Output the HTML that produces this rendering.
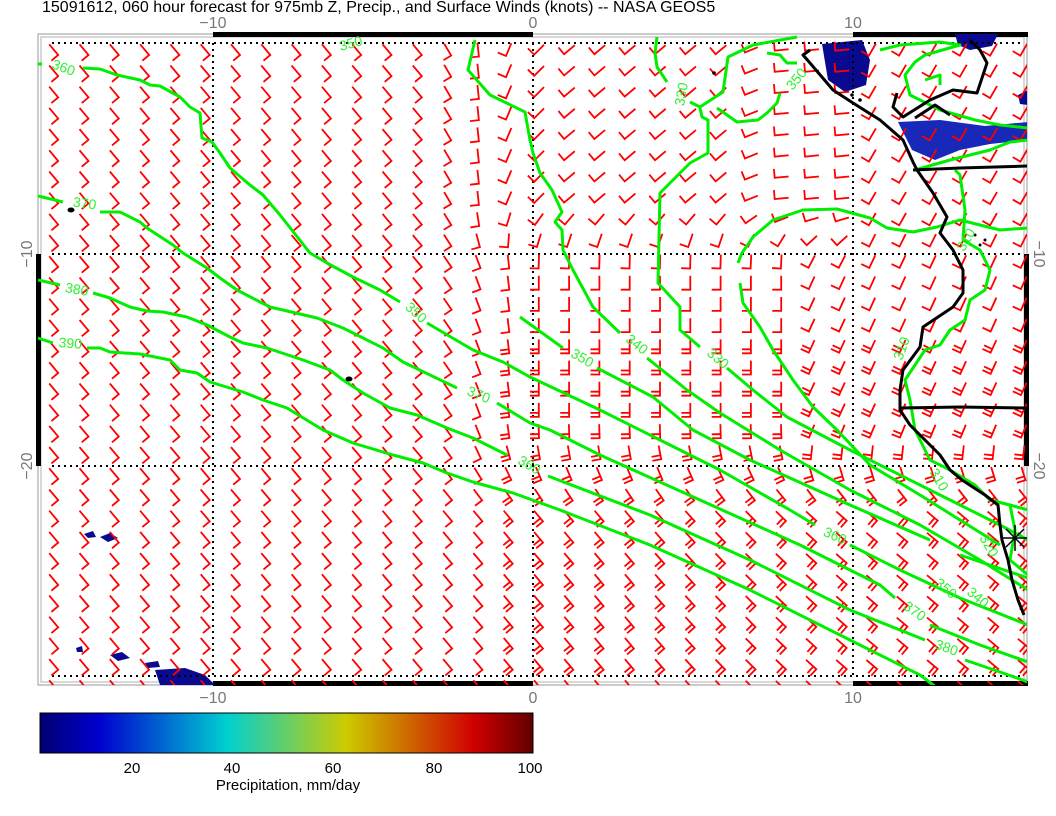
<!DOCTYPE html>
<html><head><meta charset="utf-8"><style>
html,body{margin:0;padding:0;background:#fff;width:1056px;height:816px;overflow:hidden}
svg{display:block}
text{font-family:"Liberation Sans",sans-serif}
</style></head><body>
<svg id="s" width="1056" height="816" viewBox="0 0 1056 816" xmlns="http://www.w3.org/2000/svg">
<defs>
<linearGradient id="cb" x1="0" x2="1" y1="0" y2="0">
<stop offset="0" stop-color="#000070"/>
<stop offset="0.12" stop-color="#0000d0"/>
<stop offset="0.38" stop-color="#00d0d0"/>
<stop offset="0.62" stop-color="#cccc00"/>
<stop offset="0.88" stop-color="#d00000"/>
<stop offset="1" stop-color="#600000"/>
</linearGradient>
<clipPath id="pc"><rect x="38" y="34" width="989" height="651"/></clipPath>
</defs>
<text x="42" y="12" font-size="16" fill="#000">15091612, 060 hour forecast for 975mb Z, Precip., and Surface Winds (knots) -- NASA GEOS5</text>
<g font-size="16" fill="#777" text-anchor="middle">
<text x="213" y="28">−10</text><text x="533" y="28">0</text><text x="853" y="28">10</text>
<text x="213" y="703">−10</text><text x="533" y="703">0</text><text x="853" y="703">10</text>
<text transform="translate(32,254) rotate(-90)">−10</text>
<text transform="translate(32,466) rotate(-90)">−20</text>
<text transform="translate(1034,254) rotate(90)">−10</text>
<text transform="translate(1034,466) rotate(90)">−20</text>
</g>
<rect x="38" y="34" width="989" height="651" fill="none" stroke="#999" stroke-width="1"/>
<rect x="41" y="37" width="983" height="645" fill="none" stroke="#ccc" stroke-width="1.5"/>
<g fill="#000">
<rect x="213" y="32" width="320" height="5"/><rect x="853" y="32" width="175" height="5"/>
<rect x="213" y="681" width="320" height="5"/><rect x="853" y="681" width="175" height="5"/>
<rect x="36" y="254" width="5" height="212"/><rect x="1024" y="254" width="5" height="212"/>
</g>
<g clip-path="url(#pc)">
<g fill="#0a0a90">
<path d="M822 44 L862 40 L870 60 L866 85 L845 92 L828 80 Z"/>
<path d="M955 34 L998 34 L992 46 L970 50 L958 45 Z"/>
<path d="M1018 95 L1028 90 L1028 105 L1020 104 Z"/>
<path d="M84 534 L93 531 L96 537 L88 538 Z"/>
<path d="M100 537 L110 533 L118 538 L108 542 Z"/>
<path d="M76 648 L82 646 L83 652 L77 652 Z"/>
<path d="M110 655 L122 652 L130 658 L118 661 Z"/>
<path d="M145 663 L158 661 L160 667 L148 668 Z"/>
<path d="M155 670 L185 668 L205 675 L215 685 L160 685 Z"/>
</g>
<path d="M898 122 L940 120 L985 126 L1028 122 L1028 140 L990 144 L960 150 L935 160 L912 150 Z" fill="#1828b8"/>
<g stroke="#000" stroke-width="2" stroke-dasharray="2,4" fill="none">
<line x1="52" y1="43" x2="1022" y2="43"/>
<line x1="52" y1="676" x2="1022" y2="676"/>
<line x1="52" y1="254" x2="1022" y2="254"/>
<line x1="52" y1="466" x2="1022" y2="466"/>
<line x1="213" y1="43" x2="213" y2="676"/>
<line x1="533" y1="43" x2="533" y2="676"/>
<line x1="853" y1="43" x2="853" y2="676"/>
</g>
<g id="barbs" stroke="#ff0000" stroke-width="1.8" fill="none" stroke-linecap="square"></g>
<g stroke="#00ee00" stroke-width="3" fill="none" stroke-linejoin="round">
<polyline points="38,64 42,64"/>
<polyline points="83,68 100,69 117,75 140,80 150,85 160,86 180,97 190,107 200,113 202,138 212,142 220,153 230,168 250,185 263,195 280,215 310,253 327,263 353,277 380,290 400,302"/>
<polyline points="427,323 473,350 503,362 530,377 600,410 660,440 720,470 790,510 815,525"/>
<polyline points="850,545 900,570 960,598 1028,625"/>
<polyline points="38,196 63,202"/>
<polyline points="100,212 120,212 140,222 147,228 173,245 183,253 207,268 220,278 237,290 270,307 317,318 343,328 383,348 403,362 430,375 457,388"/>
<polyline points="497,403 530,423 550,430 600,455 700,500 800,545 880,585 895,598"/>
<polyline points="930,625 980,645 1028,662"/>
<polyline points="38,280 60,285"/>
<polyline points="93,293 110,298 130,307 147,311 163,312 187,317 207,325 230,337 243,343 267,348 303,360 330,370 343,380 363,393 390,408 417,415 447,428 473,438 507,455"/>
<polyline points="548,476 650,515 750,560 850,610 925,640"/>
<polyline points="965,660 1000,672 1028,682"/>
<polyline points="38,338 53,343"/>
<polyline points="87,348 100,348 110,352 140,354 170,360 180,370 197,373 210,382 243,392 263,400 287,408 323,430 353,443 393,455 423,463 447,473 473,482 513,493 560,510 650,545 750,590 850,640 920,675 940,690"/>
<polyline points="475,40 468,70 490,95 525,112 530,140 533,153 540,173 552,190 562,212 555,222 562,230 563,250 573,270 593,307 620,333"/>
<polyline points="647,358 687,390 720,413 780,450 850,490 920,525 980,560 1028,590"/>
<polyline points="520,317 563,348"/>
<polyline points="597,368 653,397 693,430 750,460 850,505 930,540"/>
<polyline points="960,555 1028,578"/>
<polyline points="657,37 655,53 657,67 667,82"/>
<polyline points="690,102 700,107 723,92 728,57 753,45 797,37"/>
<polyline points="700,108 702,117 708,120 708,153 690,163 660,193 658,283 680,307 680,330 700,347"/>
<polyline points="727,368 753,390 787,417 850,450 930,490 1000,525 1028,540"/>
<polyline points="738,263 742,253 753,237 773,220 803,210 837,209 870,218 887,228 913,232 937,227 960,220 1000,230 1028,228"/>
<polyline points="740,283 743,303 760,327 773,350 793,380 813,407 837,430 870,465 920,495 960,520 1000,545"/>
<polyline points="767,53 780,55 787,63 797,63"/>
<polyline points="780,93 777,103 767,113 758,120 737,122 717,108"/>
<polyline points="880,50 900,45 940,42 960,45 925,55 915,62 905,75 910,95 940,110 975,120 1000,125 1028,128"/>
<polyline points="925,80 940,75 940,85"/>
<polyline points="915,170 950,160 990,150 1010,142 1028,140"/>
<polyline points="955,170 960,175 965,210 963,240 980,250 990,270 985,290 970,300 965,320 950,330 940,345 925,350 915,365 905,380 910,400 915,430 930,460 950,470 975,485 990,500 1010,505 1015,530 1010,560 1028,575"/>
<polyline points="1010,505 1028,510"/>
</g>
<g stroke="#000" stroke-width="3" fill="none" stroke-linejoin="round">
<polyline points="810,50 803,55 810,63 833,90 853,103 880,120 903,140 913,162 917,170 933,193 947,217 940,233 953,250 963,270 963,293 953,307 923,327 920,347 903,370 900,390 900,410 910,425 925,440 940,455 950,470 962,480 985,495 998,505 1000,525 1002,540 1008,560 1012,580 1018,600 1024,615"/>
<polyline points="913,170 960,168 1028,166"/>
<polyline points="900,408 960,407 1028,408"/>
<polyline points="897,93 893,107 903,117 930,100 953,90 977,93 987,63 980,50 970,40"/>
<polyline points="915,118 935,105 950,115"/>
</g>
<g fill="#000"><ellipse cx="71" cy="210" rx="3.5" ry="2.5"/><ellipse cx="349" cy="379" rx="3.5" ry="2.5"/><circle cx="714" cy="73" r="1.8"/><circle cx="975" cy="235" r="1.5"/><circle cx="985" cy="240" r="1.5"/><circle cx="980" cy="245" r="1.5"/><circle cx="852" cy="95" r="1.8"/><circle cx="860" cy="100" r="1.8"/></g>
<g stroke="#000" stroke-width="1.5">
<line x1="1003" y1="538" x2="1027" y2="538"/><line x1="1015" y1="525" x2="1015" y2="551"/>
<line x1="1006" y1="529" x2="1024" y2="547"/><line x1="1006" y1="547" x2="1024" y2="529"/>
</g>
<g font-size="14" fill="#33ee33" text-anchor="middle">
<text transform="translate(62,72) rotate(20)">360</text>
<text transform="translate(84,208) rotate(8)">370</text>
<text transform="translate(76,294) rotate(10)">380</text>
<text transform="translate(70,348) rotate(4)">390</text>
<text transform="translate(413,316) rotate(42)">350</text>
<text transform="translate(477,399) rotate(22)">370</text>
<text transform="translate(527,469) rotate(30)">360</text>
<text transform="translate(580,362) rotate(30)">350</text>
<text transform="translate(634,348) rotate(38)">340</text>
<text transform="translate(715,362) rotate(40)">330</text>
<text transform="translate(833,540) rotate(25)">360</text>
<text transform="translate(912,615) rotate(35)">370</text>
<text transform="translate(945,652) rotate(20)">380</text>
<text transform="translate(943,592) rotate(40)">350</text>
<text transform="translate(975,601) rotate(40)">340</text>
<text transform="translate(686,95) rotate(-80)">330</text>
<text transform="translate(800,82) rotate(-50)">350</text>
<text transform="translate(352,48) rotate(-15)">350</text>
<text transform="translate(985,548) rotate(60)">320</text>
<text transform="translate(906,350) rotate(-70)">310</text>
<text transform="translate(970,242) rotate(-60)">310</text>
<text transform="translate(935,482) rotate(60)">310</text>
</g>
</g>
<rect x="40" y="713" width="493" height="40" fill="url(#cb)" stroke="#000" stroke-width="1"/>
<g font-size="15" fill="#000" text-anchor="middle">
<text x="132" y="773">20</text><text x="232" y="773">40</text><text x="333" y="773">60</text><text x="434" y="773">80</text><text x="530" y="773">100</text>
<text x="288" y="790">Precipitation, mm/day</text>
</g>
</svg>
<script>
(function(){
var g=document.getElementById('barbs');var out='';
function cl(v){return v<0?0:v>1?1:v;}
function ss(a,b,v){var t=cl((v-a)/(b-a));return t*t*(3-2*t);}
for(var j=0;j<31;j++){
 var y=50+j*21.2;
 for(var i=0;i<33;i++){
  var x=54+i*30.3;
  var top;
  if(x<420)top=40;else if(x<560)top=40-90*ss(420,560,x);else if(x<720)top=-50;else if(x<850)top=-50-35*ss(720,780,x);else top=-30;
  var mid;
  if(x<420)mid=40;else if(x<540)mid=40-40*ss(420,540,x);else if(x<800)mid=0;else mid=-25;
  var bot=40+10*ss(600,900,x);
  var a;
  var t1=ss(200,270,y), t2=ss(420,520,y);
  a=top*(1-t1)+mid*t1; a=a*(1-t2)+bot*t2;
  var r=a*Math.PI/180, L=13, B=8;
  var sx=Math.sin(r), cx=Math.cos(r);
  var vx=x+L/2*sx, vy=y+L/2*cx;
  var tx=vx-L*sx, ty=vy-L*cx;
  var bx=-cx, by=sx;
  var d='M'+tx.toFixed(1)+' '+ty.toFixed(1)+'L'+vx.toFixed(1)+' '+vy.toFixed(1)+'l'+(bx*B).toFixed(1)+' '+(by*B).toFixed(1);
  if(y>330 && x>480){var px=vx-4*sx, py=vy-4*cx; d+='M'+px.toFixed(1)+' '+py.toFixed(1)+'l'+(bx*B).toFixed(1)+' '+(by*B).toFixed(1);}
  out+='<path d="'+d+'"/>';
 }
}
g.innerHTML=out;
})();
</script>
</body></html>
